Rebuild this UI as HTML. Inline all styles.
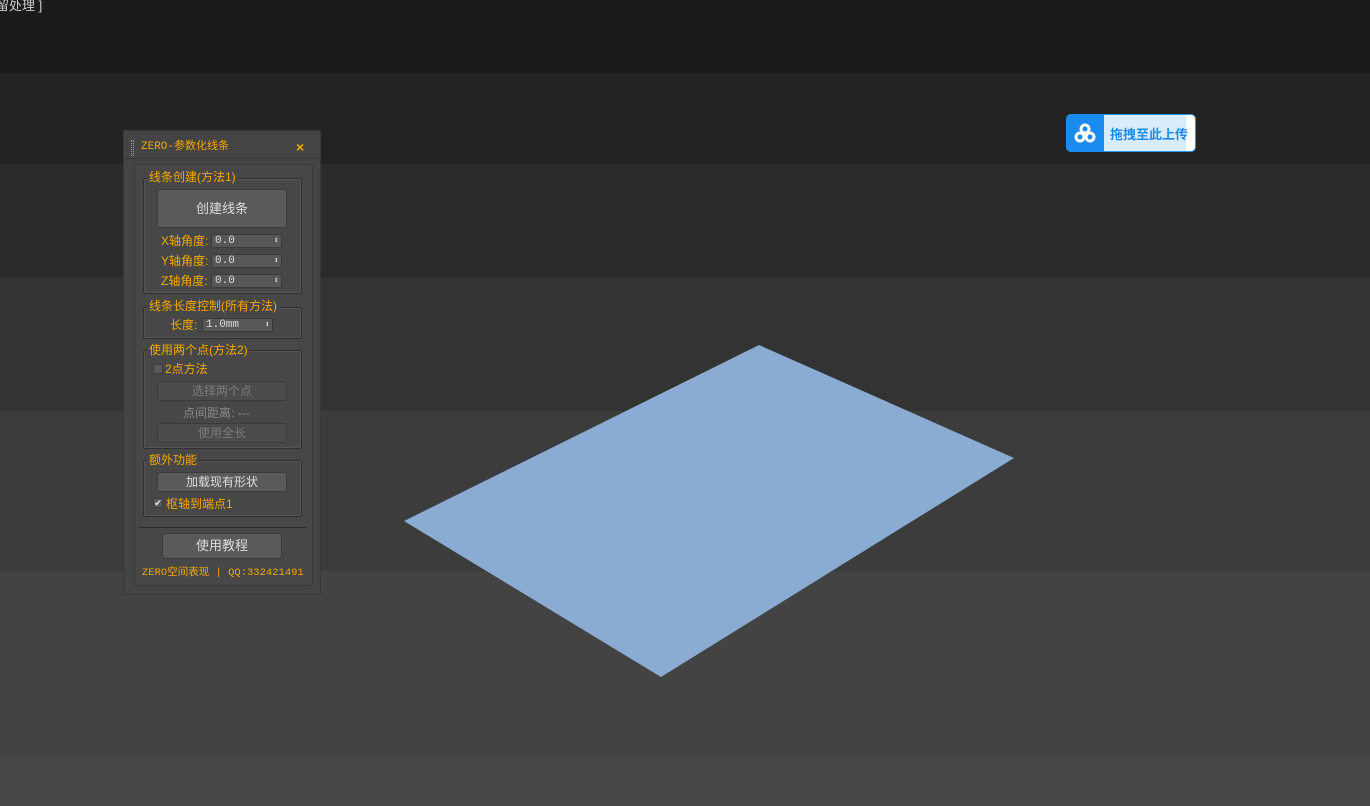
<!DOCTYPE html>
<html><head><meta charset="utf-8"><style>
*{margin:0;padding:0;box-sizing:border-box}
body{width:1370px;height:806px;overflow:hidden;position:relative;font-family:"Liberation Sans","Noto Sans CJK SC",sans-serif;font-size:12px}
.b{position:absolute;left:0;width:1370px}
.a{position:absolute}
.o{color:#f5a800}
.g{color:#8a8a8a}
.fs{position:absolute;border:1px solid #2f2f2f;border-radius:2px;box-shadow:inset 0 0 0 1px #555}
.lg{position:absolute;background:#474747;padding:0 2px;color:#f5a800;font-size:12px;line-height:14px}
.btn{position:absolute;background:#5a5a5a;border:1px solid #3a3a3a;border-radius:3px;color:#ddd;text-align:center}
.btn.d{background:#4b4b4b;color:#7d7d7d}
.sp{position:absolute;background:#575757;border:1px solid #3a3a3a;color:#ddd;font-family:"Liberation Mono",monospace;font-size:11px;line-height:12px;padding-left:3px;height:14px}
.sp:after{content:"⬍";position:absolute;right:2px;top:0;font-size:9px;color:#ccc}
.lb{position:absolute;color:#f5a800;font-size:12px;line-height:14px}
</style></head><body>
<div class="b" style="top:0;height:73px;background:#1b1b1b"></div>
<div class="b" style="top:73px;height:91px;background:#232323"></div>
<div class="b" style="top:164px;height:114px;background:#2b2b2b"></div>
<div class="b" style="top:278px;height:133px;background:#333"></div>
<div class="b" style="top:411px;height:160px;background:#3c3c3c"></div>
<div class="b" style="top:571px;height:184px;background:#434343"></div>
<div class="b" style="top:755px;height:51px;background:#474747"></div>
<div class="a" style="left:-4px;top:-5px;color:#ccc;font-size:13px">留处理 ]</div>

<svg class="a" style="left:0;top:0" width="1370" height="806"><polygon points="404,521 759,345 1014,458 661,677" fill="#8aabd2"/></svg>

<div class="a" style="left:1066px;top:114px;width:130px;height:38px;background:#d8ecfc;border:1px solid #2196f3;border-radius:5px"></div>
<div class="a" style="left:1066px;top:114px;width:38px;height:38px;background:#1a8cf0;border-radius:5px 0 0 5px"></div>
<svg class="a" style="left:1073px;top:122px" width="24" height="22" viewBox="0 0 24 22"><g fill="none" stroke="#fff" stroke-width="3"><circle cx="12" cy="7" r="4"/><circle cx="7" cy="15" r="4"/><circle cx="17" cy="15" r="4"/></g></svg>
<div class="a" style="left:1186px;top:115px;width:9px;height:36px;background:#fff;border-radius:0 4px 4px 0"></div>
<div class="a" style="left:1110px;top:124px;color:#1a8cf0;font-weight:bold;font-size:13px">拖拽至此上传</div>

<div class="a" style="left:123px;top:130px;width:198px;height:465px;background:#444;border:1px solid #383838"></div>
<div class="a" style="left:131px;top:140px;width:3px;height:16px;border-left:1px dotted #999;border-right:1px dotted #999"></div>
<div class="a o" style="left:141px;top:140px;font-family:'Liberation Mono','Noto Sans CJK SC',monospace;font-size:11px;line-height:14px">ZERO-参数化线条</div>
<div class="a o" style="left:296px;top:139px;font-weight:bold;font-size:14px">×</div>
<div class="a" style="left:124px;top:158px;width:196px;height:1px;background:#363636"></div>
<div class="a" style="left:134px;top:164px;width:179px;height:422px;background:#474747;border:1px solid #383838;border-radius:2px"></div>

<div class="fs" style="left:143px;top:178px;width:159px;height:116px"></div>
<div class="lg" style="left:147px;top:170px">线条创建(方法1)</div>
<div class="btn" style="left:157px;top:189px;width:130px;height:39px;line-height:37px;font-size:13px">创建线条</div>
<div class="lb" style="left:161px;top:234px">X轴角度:</div><div class="sp" style="left:211px;top:234px;width:71px">0.0</div>
<div class="lb" style="left:161px;top:254px">Y轴角度:</div><div class="sp" style="left:211px;top:254px;width:71px">0.0</div>
<div class="lb" style="left:161px;top:274px">Z轴角度:</div><div class="sp" style="left:211px;top:274px;width:71px">0.0</div>

<div class="fs" style="left:143px;top:307px;width:159px;height:32px"></div>
<div class="lg" style="left:147px;top:299px">线条长度控制(所有方法)</div>
<div class="lb" style="left:170px;top:318px">长度:</div><div class="sp" style="left:202px;top:318px;width:71px">1.0mm</div>

<div class="fs" style="left:143px;top:350px;width:159px;height:99px"></div>
<div class="lg" style="left:147px;top:343px">使用两个点(方法2)</div>
<div class="a" style="left:153px;top:364px;width:10px;height:10px;background:#5a5a5a;border:1px solid #3a3a3a"></div>
<div class="lb" style="left:165px;top:362px">2点方法</div>
<div class="btn d" style="left:157px;top:381px;width:130px;height:20px;line-height:18px">选择两个点</div>
<div class="a g" style="left:183px;top:404px">点间距离: ---</div>
<div class="btn d" style="left:157px;top:423px;width:130px;height:20px;line-height:18px">使用全长</div>

<div class="fs" style="left:143px;top:460px;width:159px;height:57px"></div>
<div class="lg" style="left:147px;top:453px">额外功能</div>
<div class="btn" style="left:157px;top:472px;width:130px;height:20px;line-height:18px">加载现有形状</div>
<div class="a" style="left:153px;top:498px;width:10px;height:10px;background:#5a5a5a;border:1px solid #3a3a3a;color:#eee;font-size:9px;line-height:9px;text-align:center">✔</div>
<div class="lb" style="left:166px;top:497px">枢轴到端点1</div>

<div class="a" style="left:139px;top:527px;width:167px;height:1px;background:#2a2a2a"></div>
<div class="btn" style="left:162px;top:533px;width:120px;height:26px;line-height:24px;font-size:13px">使用教程</div>
<div class="a o" style="left:142px;top:564px;font-size:10.5px;font-family:'Liberation Mono','Noto Sans CJK SC',monospace">ZERO空间表现 | QQ:332421491</div>
</body></html>
